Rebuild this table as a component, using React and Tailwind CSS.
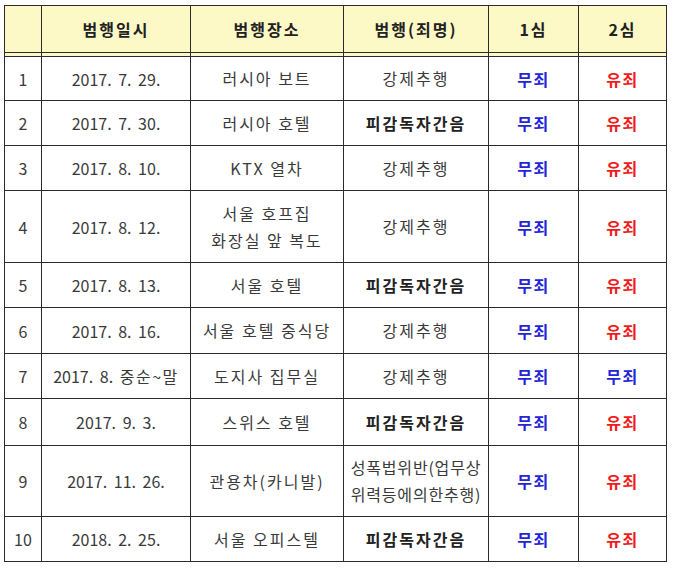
import React from "react";

const rows = [
  { no: "1", date: "2017. 7. 29.", place: ["러시아 보트"], crime: ["강제추행"], bold: false, first: "무죄", second: "유죄", h: "h-[44px]" },
  { no: "2", date: "2017. 7. 30.", place: ["러시아 호텔"], crime: ["피감독자간음"], bold: true, first: "무죄", second: "유죄", h: "h-[45px]" },
  { no: "3", date: "2017. 8. 10.", place: ["KTX 열차"], crime: ["강제추행"], bold: false, first: "무죄", second: "유죄", h: "h-[45px]" },
  { no: "4", date: "2017. 8. 12.", place: ["서울 호프집", "화장실 앞 복도"], crime: ["강제추행"], bold: false, first: "무죄", second: "유죄", h: "h-[72px]" },
  { no: "5", date: "2017. 8. 13.", place: ["서울 호텔"], crime: ["피감독자간음"], bold: true, first: "무죄", second: "유죄", h: "h-[45px]" },
  { no: "6", date: "2017. 8. 16.", place: ["서울 호텔 중식당"], crime: ["강제추행"], bold: false, first: "무죄", second: "유죄", h: "h-[46px]" },
  { no: "7", date: "2017. 8. ", dateKo: "중순~말", place: ["도지사 집무실"], crime: ["강제추행"], bold: false, first: "무죄", second: "무죄", h: "h-[45px]" },
  { no: "8", date: "2017. 9. 3.", place: ["스위스 호텔"], crime: ["피감독자간음"], bold: true, first: "무죄", second: "유죄", h: "h-[47px]" },
  { no: "9", date: "2017. 11. 26.", place: ["관용차(카니발)"], crime: ["성폭법위반(업무상", "위력등에의한추행)"], bold: false, tight: true, first: "무죄", second: "유죄", h: "h-[71px]" },
  { no: "10", date: "2018. 2. 25.", place: ["서울 오피스텔"], crime: ["피감독자간음"], bold: true, first: "무죄", second: "유죄", h: "h-[44px]" },
];

const cols = "grid grid-cols-[37px_149px_153px_145px_90px_87px]";
const cell = "flex flex-col items-center justify-center text-center border-r border-[#2b2b2b] last:border-r-0";

const Verdict = ({ v }) => (
  <span className={v === "무죄" ? "font-bold tracking-[1.5px] text-[#2424d8]" : "font-bold tracking-[1.5px] text-[#f01c1c]"}>{v}</span>
);

export default function App() {
  return (
    <div
      className="w-[674px] h-[571px] bg-white pt-[5px] pl-[4px] text-[#3a3a3a] text-[16px]"
      style={{ fontFamily: '"Noto Sans CJK KR", "Noto Sans", sans-serif' }}
    >
      <div className="w-[663px] border border-[#2b2b2b]">
        {/* header */}
        <div className={`${cols} h-[47px] bg-[#fdf9c6] border-b border-[#2b2b2b] font-bold text-[#222] tracking-[2px]`}>
          <div className={cell}></div>
          <div className={cell}>범행일시</div>
          <div className={cell}>범행장소</div>
          <div className={cell}>범행(죄명)</div>
          <div className={cell}>1심</div>
          <div className={cell}>2심</div>
        </div>
        {/* double line strip */}
        <div className={`${cols} h-[4px] bg-[#fdf9c6] border-b border-[#2b2b2b]`}>
          <div className={cell}></div>
          <div className={cell}></div>
          <div className={cell}></div>
          <div className={cell}></div>
          <div className={cell}></div>
          <div className={cell}></div>
        </div>
        {rows.map((r, i) => (
          <div
            key={r.no}
            className={`${cols} ${r.h} ${i < rows.length - 1 ? "border-b border-[#2b2b2b]" : ""}`}
          >
            <div className={cell}>{r.no}</div>
            <div className={cell}>
              <span className="whitespace-pre [word-spacing:3px]">
                {r.date}
                {r.dateKo && <span className="tracking-[1.5px]">{r.dateKo}</span>}
              </span>
            </div>
            <div className={`${cell} leading-[27px] tracking-[2px]`}>
              {r.place.map((p) => (
                <span key={p} className="whitespace-pre">{p}</span>
              ))}
            </div>
            <div
              className={`${cell} leading-[27px] ${r.tight ? "tracking-[0.8px]" : "tracking-[2px]"} ${r.bold ? "font-bold text-[#222]" : ""}`}
            >
              {r.crime.map((c) => (
                <span key={c} className="whitespace-nowrap">{c}</span>
              ))}
            </div>
            <div className={cell}><Verdict v={r.first} /></div>
            <div className={cell}><Verdict v={r.second} /></div>
          </div>
        ))}
      </div>
    </div>
  );
}
